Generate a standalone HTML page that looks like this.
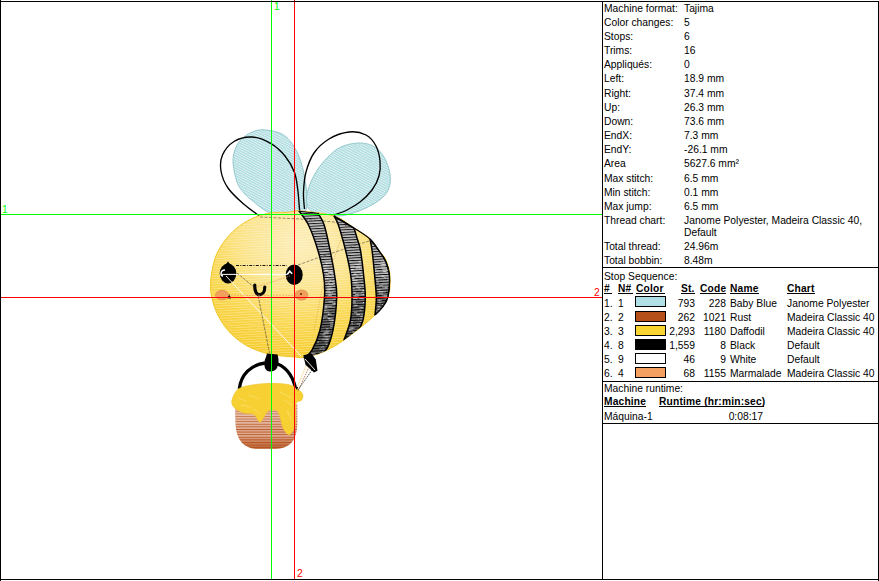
<!DOCTYPE html>
<html><head><meta charset="utf-8">
<style>
html,body{margin:0;padding:0;background:#fff;}
body{width:879px;height:581px;position:relative;overflow:hidden;font-family:"Liberation Sans",sans-serif;}
.ln{position:absolute;background:#000;}
.t{position:absolute;font-size:10.3px;line-height:12px;white-space:nowrap;color:#000;margin-top:-1px;}
.b{position:absolute;font-size:10.2px;letter-spacing:0.2px;line-height:12px;white-space:nowrap;color:#000;font-weight:bold;margin-top:-1px;}
.u{position:absolute;height:1px;background:#000;}
.sw{position:absolute;width:29px;height:9px;border:1px solid #000;left:635px;}
#bee{position:absolute;left:0;top:0;}
</style></head><body>
<svg id="bee" width="602" height="581" viewBox="0 0 602 581">
<defs>
<pattern id="pBlue" width="3" height="2.2" patternUnits="userSpaceOnUse" patternTransform="rotate(28)">
<rect width="3" height="2.2" fill="#a9dade"/><rect y="1.2" width="3" height="0.9" fill="#eaf7f8"/></pattern>
<pattern id="pYel" width="4" height="2.5" patternUnits="userSpaceOnUse" patternTransform="rotate(-3)">
<rect y="1.5" width="4" height="0.9" fill="#fffbe8" fill-opacity="0.42"/></pattern>
<radialGradient id="gYel" gradientUnits="userSpaceOnUse" cx="0" cy="0" r="1" gradientTransform="translate(300,242) scale(130,112)">
<stop offset="0" stop-color="#fcedb8"/><stop offset="0.4" stop-color="#fbe48c"/><stop offset="0.72" stop-color="#f9d64a"/><stop offset="1" stop-color="#f6cc2a"/></radialGradient>
<pattern id="pStripe" width="4" height="2.6" patternUnits="userSpaceOnUse" patternTransform="rotate(-3)">
<rect width="4" height="2.6" fill="#a4a4a4"/><rect y="0" width="4" height="1.0" fill="#0a0a0a"/><rect y="1.5" width="4" height="0.6" fill="#eeeeee"/></pattern>
<pattern id="pPot" width="5" height="2.6" patternUnits="userSpaceOnUse">
<rect width="5" height="2.6" fill="#b9541e"/><rect y="1.2" width="5" height="1.1" fill="#f2d6cc"/></pattern>
<linearGradient id="gPot" x1="0" y1="0" x2="0" y2="1">
<stop offset="0" stop-color="#fff" stop-opacity="0.3"/><stop offset="0.3" stop-color="#fff" stop-opacity="0.22"/><stop offset="0.62" stop-color="#fff" stop-opacity="0"/><stop offset="0.8" stop-color="#b3501c" stop-opacity="0.3"/><stop offset="1" stop-color="#b3501c" stop-opacity="0.8"/></linearGradient>
<linearGradient id="gStripeDark" x1="0" y1="0" x2="0" y2="1">
<stop offset="0" stop-color="#fff" stop-opacity="0.1"/><stop offset="0.45" stop-color="#000" stop-opacity="0"/><stop offset="0.7" stop-color="#000" stop-opacity="0.4"/><stop offset="1" stop-color="#000" stop-opacity="0.55"/></linearGradient>
<clipPath id="cBody"><path d="M210.5,283.5 C210.2,290.7 211.3,296.0 212.9,302.0 C214.5,308.0 217.0,313.9 220.1,319.2 C223.2,324.6 227.1,329.7 231.4,334.1 C235.8,338.4 240.9,342.3 246.2,345.4 C251.6,348.5 258.2,350.9 263.5,352.6 C268.8,354.2 272.7,354.8 278.0,355.5 C283.3,356.2 290.5,356.7 295.0,357.0 C299.5,357.3 300.3,358.3 305.0,357.5 C309.7,356.7 316.5,354.9 323.0,352.0 C329.5,349.1 335.3,346.2 344.0,340.0 C352.7,333.8 367.7,322.2 375.0,315.0 C382.3,307.8 385.5,303.5 388.0,297.0 C390.5,290.5 390.3,282.2 390.0,276.0 C389.7,269.8 387.7,264.0 386.0,260.0 C384.3,256.0 382.7,255.5 380.0,252.0 C377.3,248.5 374.3,243.0 370.0,239.0 C365.7,235.0 360.0,231.8 354.0,228.0 C348.0,224.2 343.0,218.8 334.0,216.0 C325.0,213.2 307.6,211.6 300.0,211.0 C292.4,210.4 293.3,211.9 288.2,212.3 C283.2,212.6 275.7,212.0 269.6,213.1 C263.5,214.2 257.4,216.1 251.8,218.7 C246.2,221.3 240.8,224.8 236.0,228.7 C231.3,232.7 227.0,237.4 223.4,242.5 C219.9,247.5 217.0,252.2 214.8,259.0 C212.7,265.9 210.8,276.3 210.5,283.5Z"/></clipPath>
<clipPath id="cS0"><path d="M299.0,211.0 C300.6,213.3 305.4,218.5 308.5,225.0 C311.6,231.5 315.3,241.7 317.8,250.0 C320.3,258.3 322.5,267.2 323.6,275.0 C324.7,282.8 325.1,287.8 324.5,297.0 C323.9,306.2 322.1,321.2 320.0,330.0 C317.9,338.8 314.7,345.3 312.0,350.0 C309.3,354.7 305.3,356.7 304.0,358.0 L316.0,357.0 C317.7,355.8 323.2,354.5 326.0,350.0 C328.8,345.5 331.2,338.8 333.0,330.0 C334.8,321.2 336.4,306.2 336.7,297.0 C337.0,287.8 335.7,282.8 334.6,275.0 C333.5,267.2 331.7,258.3 330.0,250.0 C328.3,241.7 326.2,231.2 324.2,225.0 C322.2,218.8 319.0,215.0 318.0,213.0Z"/></clipPath>
<clipPath id="cS1"><path d="M334.0,216.0 C334.7,217.5 336.5,219.3 338.4,225.0 C340.3,230.7 343.4,241.7 345.5,250.0 C347.6,258.3 349.6,267.2 350.7,275.0 C351.8,282.8 352.0,289.5 352.0,297.0 C352.0,304.5 351.8,312.8 350.5,320.0 C349.2,327.2 345.1,336.7 344.0,340.0 L357.0,333.0 C358.0,330.8 361.6,326.0 363.0,320.0 C364.4,314.0 365.2,304.5 365.3,297.0 C365.4,289.5 364.4,282.8 363.6,275.0 C362.8,267.2 361.5,256.2 360.4,250.0 C359.3,243.8 358.1,241.7 357.0,238.0 C355.9,234.3 354.5,229.7 354.0,228.0Z"/></clipPath>
<clipPath id="cS2"><path d="M370.0,239.0 C370.3,240.8 371.2,244.0 372.0,250.0 C372.8,256.0 373.9,267.2 374.6,275.0 C375.3,282.8 376.2,290.3 376.3,297.0 C376.4,303.7 375.2,312.0 375.0,315.0 L375.0,315.0 C376.2,313.8 379.8,311.0 382.0,308.0 C384.2,305.0 386.8,302.3 388.0,297.0 C389.2,291.7 389.8,281.8 389.5,276.0 C389.2,270.2 387.6,266.0 386.0,262.0 C384.4,258.0 382.7,255.8 380.0,252.0 C377.3,248.2 371.7,241.2 370.0,239.0Z"/></clipPath>
</defs>
<path d="M266.0,130.0 C270.5,130.5 277.5,131.5 282.0,134.0 C286.5,136.5 289.8,140.3 293.0,145.0 C296.2,149.7 298.8,155.2 301.0,162.0 C303.2,168.8 305.0,178.8 306.0,186.0 C307.0,193.2 307.7,200.3 307.0,205.0 C306.3,209.7 306.2,212.5 302.0,214.0 C297.8,215.5 287.7,214.3 282.0,214.0 C276.3,213.7 272.7,214.0 268.0,212.0 C263.3,210.0 258.0,205.2 254.0,202.0 C250.0,198.8 246.8,196.3 244.0,193.0 C241.2,189.7 238.8,187.2 237.0,182.0 C235.2,176.8 233.2,167.8 233.0,162.0 C232.8,156.2 234.2,151.2 236.0,147.0 C237.8,142.8 240.8,139.7 244.0,137.0 C247.2,134.3 251.3,132.2 255.0,131.0 C258.7,129.8 261.5,129.5 266.0,130.0Z" fill="url(#pBlue)" stroke="#8cc4c9" stroke-width="0.9"/>
<path d="M358.0,143.0 C363.3,142.8 368.7,143.7 373.0,146.0 C377.3,148.3 381.2,152.3 384.0,157.0 C386.8,161.7 389.2,168.8 390.0,174.0 C390.8,179.2 390.3,184.0 389.0,188.0 C387.7,192.0 385.5,194.8 382.0,198.0 C378.5,201.2 373.3,204.3 368.0,207.0 C362.7,209.7 355.5,212.5 350.0,214.0 C344.5,215.5 340.8,216.2 335.0,216.0 C329.2,215.8 319.7,214.8 315.0,213.0 C310.3,211.2 308.2,208.8 307.0,205.0 C305.8,201.2 306.5,195.5 308.0,190.0 C309.5,184.5 312.7,177.5 316.0,172.0 C319.3,166.5 323.8,161.2 328.0,157.0 C332.2,152.8 336.0,149.3 341.0,147.0 C346.0,144.7 352.7,143.2 358.0,143.0Z" fill="url(#pBlue)" stroke="#8cc4c9" stroke-width="0.9"/>
<path d="M260.0,216.5 C257.2,214.3 248.3,208.2 243.0,203.5 C237.7,198.8 231.7,193.4 228.0,188.0 C224.3,182.6 221.9,176.5 221.0,171.0 C220.1,165.5 220.3,159.9 222.5,155.0 C224.7,150.1 229.1,144.5 234.0,141.5 C238.9,138.5 245.8,136.7 252.0,137.0 C258.2,137.3 265.5,140.4 271.0,143.6 C276.5,146.8 281.1,151.2 285.0,156.0 C288.9,160.8 292.4,166.7 294.5,172.4 C296.6,178.1 297.0,184.1 297.8,190.0 C298.6,195.9 299.0,204.3 299.4,208.0 C299.8,211.7 299.9,211.3 300.0,212.0" fill="none" stroke="#000" stroke-width="1.35"/>
<path d="M304.5,209.0 C304.3,206.2 303.2,198.2 303.5,192.0 C303.8,185.8 304.2,178.5 306.0,172.0 C307.8,165.5 310.2,158.5 314.0,153.0 C317.8,147.5 323.2,142.5 329.0,139.0 C334.8,135.5 342.8,132.7 349.0,132.0 C355.2,131.3 361.5,132.7 366.0,135.0 C370.5,137.3 373.7,141.7 376.0,146.0 C378.3,150.3 379.5,156.0 380.0,161.0 C380.5,166.0 380.3,171.2 379.0,176.0 C377.7,180.8 375.2,185.7 372.0,190.0 C368.8,194.3 364.2,198.7 360.0,202.0 C355.8,205.3 351.3,207.8 347.0,210.0 C342.7,212.2 336.2,214.2 334.0,215.0" fill="none" stroke="#000" stroke-width="1.35"/>
<path d="M210.5,283.5 C210.2,290.7 211.3,296.0 212.9,302.0 C214.5,308.0 217.0,313.9 220.1,319.2 C223.2,324.6 227.1,329.7 231.4,334.1 C235.8,338.4 240.9,342.3 246.2,345.4 C251.6,348.5 258.2,350.9 263.5,352.6 C268.8,354.2 272.7,354.8 278.0,355.5 C283.3,356.2 290.5,356.7 295.0,357.0 C299.5,357.3 300.3,358.3 305.0,357.5 C309.7,356.7 316.5,354.9 323.0,352.0 C329.5,349.1 335.3,346.2 344.0,340.0 C352.7,333.8 367.7,322.2 375.0,315.0 C382.3,307.8 385.5,303.5 388.0,297.0 C390.5,290.5 390.3,282.2 390.0,276.0 C389.7,269.8 387.7,264.0 386.0,260.0 C384.3,256.0 382.7,255.5 380.0,252.0 C377.3,248.5 374.3,243.0 370.0,239.0 C365.7,235.0 360.0,231.8 354.0,228.0 C348.0,224.2 343.0,218.8 334.0,216.0 C325.0,213.2 307.6,211.6 300.0,211.0 C292.4,210.4 293.3,211.9 288.2,212.3 C283.2,212.6 275.7,212.0 269.6,213.1 C263.5,214.2 257.4,216.1 251.8,218.7 C246.2,221.3 240.8,224.8 236.0,228.7 C231.3,232.7 227.0,237.4 223.4,242.5 C219.9,247.5 217.0,252.2 214.8,259.0 C212.7,265.9 210.8,276.3 210.5,283.5Z" fill="url(#gYel)"/>
<path d="M210.5,283.5 C210.2,290.7 211.3,296.0 212.9,302.0 C214.5,308.0 217.0,313.9 220.1,319.2 C223.2,324.6 227.1,329.7 231.4,334.1 C235.8,338.4 240.9,342.3 246.2,345.4 C251.6,348.5 258.2,350.9 263.5,352.6 C268.8,354.2 272.7,354.8 278.0,355.5 C283.3,356.2 290.5,356.7 295.0,357.0 C299.5,357.3 300.3,358.3 305.0,357.5 C309.7,356.7 316.5,354.9 323.0,352.0 C329.5,349.1 335.3,346.2 344.0,340.0 C352.7,333.8 367.7,322.2 375.0,315.0 C382.3,307.8 385.5,303.5 388.0,297.0 C390.5,290.5 390.3,282.2 390.0,276.0 C389.7,269.8 387.7,264.0 386.0,260.0 C384.3,256.0 382.7,255.5 380.0,252.0 C377.3,248.5 374.3,243.0 370.0,239.0 C365.7,235.0 360.0,231.8 354.0,228.0 C348.0,224.2 343.0,218.8 334.0,216.0 C325.0,213.2 307.6,211.6 300.0,211.0 C292.4,210.4 293.3,211.9 288.2,212.3 C283.2,212.6 275.7,212.0 269.6,213.1 C263.5,214.2 257.4,216.1 251.8,218.7 C246.2,221.3 240.8,224.8 236.0,228.7 C231.3,232.7 227.0,237.4 223.4,242.5 C219.9,247.5 217.0,252.2 214.8,259.0 C212.7,265.9 210.8,276.3 210.5,283.5Z" fill="url(#pYel)"/>
<path d="M210.5,283.5 C210.2,290.7 211.3,296.0 212.9,302.0 C214.5,308.0 217.0,313.9 220.1,319.2 C223.2,324.6 227.1,329.7 231.4,334.1 C235.8,338.4 240.9,342.3 246.2,345.4 C251.6,348.5 258.2,350.9 263.5,352.6 C268.8,354.2 272.7,354.8 278.0,355.5 C283.3,356.2 290.5,356.7 295.0,357.0 C299.5,357.3 300.3,358.3 305.0,357.5 C309.7,356.7 316.5,354.9 323.0,352.0 C329.5,349.1 335.3,346.2 344.0,340.0 C352.7,333.8 367.7,322.2 375.0,315.0 C382.3,307.8 385.5,303.5 388.0,297.0 C390.5,290.5 390.3,282.2 390.0,276.0 C389.7,269.8 387.7,264.0 386.0,260.0 C384.3,256.0 382.7,255.5 380.0,252.0 C377.3,248.5 374.3,243.0 370.0,239.0 C365.7,235.0 360.0,231.8 354.0,228.0 C348.0,224.2 343.0,218.8 334.0,216.0 C325.0,213.2 307.6,211.6 300.0,211.0 C292.4,210.4 293.3,211.9 288.2,212.3 C283.2,212.6 275.7,212.0 269.6,213.1 C263.5,214.2 257.4,216.1 251.8,218.7 C246.2,221.3 240.8,224.8 236.0,228.7 C231.3,232.7 227.0,237.4 223.4,242.5 C219.9,247.5 217.0,252.2 214.8,259.0 C212.7,265.9 210.8,276.3 210.5,283.5Z" fill="none" stroke="#f2c628" stroke-width="1"/>
<g clip-path="url(#cBody)"><path d="M299.0,211.0 C300.6,213.3 305.4,218.5 308.5,225.0 C311.6,231.5 315.3,241.7 317.8,250.0 C320.3,258.3 322.5,267.2 323.6,275.0 C324.7,282.8 325.1,287.8 324.5,297.0 C323.9,306.2 322.1,321.2 320.0,330.0 C317.9,338.8 314.7,345.3 312.0,350.0 C309.3,354.7 305.3,356.7 304.0,358.0 L316.0,357.0 C317.7,355.8 323.2,354.5 326.0,350.0 C328.8,345.5 331.2,338.8 333.0,330.0 C334.8,321.2 336.4,306.2 336.7,297.0 C337.0,287.8 335.7,282.8 334.6,275.0 C333.5,267.2 331.7,258.3 330.0,250.0 C328.3,241.7 326.2,231.2 324.2,225.0 C322.2,218.8 319.0,215.0 318.0,213.0Z" fill="url(#pStripe)"/><path d="M299.0,211.0 C300.6,213.3 305.4,218.5 308.5,225.0 C311.6,231.5 315.3,241.7 317.8,250.0 C320.3,258.3 322.5,267.2 323.6,275.0 C324.7,282.8 325.1,287.8 324.5,297.0 C323.9,306.2 322.1,321.2 320.0,330.0 C317.9,338.8 314.7,345.3 312.0,350.0 C309.3,354.7 305.3,356.7 304.0,358.0 L316.0,357.0 C317.7,355.8 323.2,354.5 326.0,350.0 C328.8,345.5 331.2,338.8 333.0,330.0 C334.8,321.2 336.4,306.2 336.7,297.0 C337.0,287.8 335.7,282.8 334.6,275.0 C333.5,267.2 331.7,258.3 330.0,250.0 C328.3,241.7 326.2,231.2 324.2,225.0 C322.2,218.8 319.0,215.0 318.0,213.0Z" fill="url(#gStripeDark)"/><g clip-path="url(#cS0)"><path d="M324.8,262.0h4.8M329.3,262.0h1.7M326.3,263.7h1.7M325.5,263.7h1.6M321.9,263.7h1.7M323.8,265.7h1.9M331.3,265.7h3.7M325.6,265.7h3.5M323.4,268.3h3.4M325.7,270.3h1.9M324.4,270.3h4.4M329.0,270.3h3.5M328.7,272.3h4.0M328.0,272.3h3.7M330.8,272.3h3.4M325.9,274.4h2.8M331.3,274.4h2.1M332.4,276.0h3.3M326.5,276.0h4.1M325.4,278.6h3.3M333.7,280.6h3.0M329.6,280.6h1.8M327.6,282.9h2.7M332.2,282.9h3.2M329.0,284.6h4.8M327.4,286.9h4.1M327.2,289.1h4.4M331.4,289.1h2.9M329.1,289.1h1.6M326.6,290.8h3.2M328.6,292.7h2.4M325.2,292.7h4.5M330.3,292.7h3.1M327.5,295.2h4.5M328.4,295.2h3.0M326.4,297.7h2.0M333.5,299.5h1.5M328.7,301.3h1.5M330.3,301.3h2.8M334.4,303.8h4.5M332.0,303.8h3.8M333.5,303.8h3.1M327.7,306.4h4.3M324.4,306.4h2.9M323.9,306.4h3.7M324.3,308.1h3.0M324.4,310.3h1.5M323.3,312.0h3.6M326.8,312.0h2.2M327.7,314.2h3.6M327.8,314.2h1.9M322.8,316.8h3.2M325.8,316.8h1.9M321.8,318.6h2.1M327.7,318.6h4.8M327.9,318.6h2.0M328.9,320.3h2.5M331.3,320.3h1.8M332.0,320.3h3.3M330.3,322.2h3.4M330.1,324.2h3.6M330.2,326.5h4.3M326.1,328.9h2.2M325.2,331.2h4.3M324.2,333.0h4.8M330.8,333.0h4.8M323.2,333.0h4.8M322.2,334.8h3.1M323.2,336.9h4.4M327.1,336.9h3.8M325.4,336.9h1.8M322.2,339.4h4.1M326.1,339.4h2.1M326.2,339.4h2.7M324.6,342.0h3.1M317.2,342.0h1.8M325.7,344.6h2.0M320.9,347.0h3.6M319.5,349.0h2.0M322.7,349.0h1.6M322.2,351.4h3.3M311.0,353.4h4.4M315.0,355.3h3.3M312.6,355.3h2.6" stroke="#ffffff" stroke-width="0.7" stroke-opacity="0.7"/></g><path d="M299.0,211.0 C300.6,213.3 305.4,218.5 308.5,225.0 C311.6,231.5 315.3,241.7 317.8,250.0 C320.3,258.3 322.5,267.2 323.6,275.0 C324.7,282.8 325.1,287.8 324.5,297.0 C323.9,306.2 322.1,321.2 320.0,330.0 C317.9,338.8 314.7,345.3 312.0,350.0 C309.3,354.7 305.3,356.7 304.0,358.0 L316.0,357.0 C317.7,355.8 323.2,354.5 326.0,350.0 C328.8,345.5 331.2,338.8 333.0,330.0 C334.8,321.2 336.4,306.2 336.7,297.0 C337.0,287.8 335.7,282.8 334.6,275.0 C333.5,267.2 331.7,258.3 330.0,250.0 C328.3,241.7 326.2,231.2 324.2,225.0 C322.2,218.8 319.0,215.0 318.0,213.0Z" fill="none" stroke="#000" stroke-width="1.5"/></g>
<g clip-path="url(#cBody)"><path d="M334.0,216.0 C334.7,217.5 336.5,219.3 338.4,225.0 C340.3,230.7 343.4,241.7 345.5,250.0 C347.6,258.3 349.6,267.2 350.7,275.0 C351.8,282.8 352.0,289.5 352.0,297.0 C352.0,304.5 351.8,312.8 350.5,320.0 C349.2,327.2 345.1,336.7 344.0,340.0 L357.0,333.0 C358.0,330.8 361.6,326.0 363.0,320.0 C364.4,314.0 365.2,304.5 365.3,297.0 C365.4,289.5 364.4,282.8 363.6,275.0 C362.8,267.2 361.5,256.2 360.4,250.0 C359.3,243.8 358.1,241.7 357.0,238.0 C355.9,234.3 354.5,229.7 354.0,228.0Z" fill="url(#pStripe)"/><path d="M334.0,216.0 C334.7,217.5 336.5,219.3 338.4,225.0 C340.3,230.7 343.4,241.7 345.5,250.0 C347.6,258.3 349.6,267.2 350.7,275.0 C351.8,282.8 352.0,289.5 352.0,297.0 C352.0,304.5 351.8,312.8 350.5,320.0 C349.2,327.2 345.1,336.7 344.0,340.0 L357.0,333.0 C358.0,330.8 361.6,326.0 363.0,320.0 C364.4,314.0 365.2,304.5 365.3,297.0 C365.4,289.5 364.4,282.8 363.6,275.0 C362.8,267.2 361.5,256.2 360.4,250.0 C359.3,243.8 358.1,241.7 357.0,238.0 C355.9,234.3 354.5,229.7 354.0,228.0Z" fill="url(#gStripeDark)"/><g clip-path="url(#cS1)"><path d="M358.5,262.0h3.8M358.7,262.0h3.3M355.2,264.5h3.4M356.5,266.1h4.2M350.7,266.1h4.2M356.2,267.8h4.0M355.7,267.8h2.6M359.0,267.8h3.4M351.9,269.5h1.7M350.8,269.5h1.6M349.9,269.5h3.1M357.5,272.0h3.1M353.8,274.1h2.2M360.2,274.1h3.3M353.5,274.1h3.3M361.4,276.3h4.7M356.1,276.3h2.2M351.8,278.3h3.0M351.8,278.3h2.3M352.9,280.6h4.6M354.2,282.9h2.8M356.8,282.9h2.0M352.3,282.9h4.1M361.4,285.4h5.0M356.3,287.1h5.0M355.7,287.1h3.0M358.2,288.8h1.6M351.7,288.8h3.0M363.3,290.7h2.5M362.8,290.7h1.9M362.3,290.7h2.3M361.2,292.4h1.6M353.3,292.4h2.4M355.0,294.4h4.4M363.1,294.4h2.0M360.4,294.4h3.5M354.2,296.1h4.3M359.7,298.6h4.8M352.9,298.6h4.3M353.2,301.1h2.4M362.7,302.7h3.0M352.2,302.7h3.7M363.0,302.7h4.0M353.9,305.3h1.7M355.1,305.3h2.6M359.3,307.6h3.1M360.9,307.6h2.4M359.8,310.2h1.6M353.9,312.4h3.3M355.9,314.4h4.4M360.6,314.4h3.2M356.8,314.4h2.9M360.4,316.7h2.7M362.0,319.0h2.0M360.2,319.0h4.9M357.8,319.0h1.5M351.0,321.5h2.1M359.8,321.5h4.4M356.9,323.8h3.6M351.3,323.8h1.7M359.0,325.6h2.4M348.2,328.2h2.6M350.1,328.2h4.6M351.3,328.2h2.1M349.3,329.9h3.3M347.3,329.9h3.3M352.5,331.8h2.0" stroke="#ffffff" stroke-width="0.7" stroke-opacity="0.7"/></g><path d="M334.0,216.0 C334.7,217.5 336.5,219.3 338.4,225.0 C340.3,230.7 343.4,241.7 345.5,250.0 C347.6,258.3 349.6,267.2 350.7,275.0 C351.8,282.8 352.0,289.5 352.0,297.0 C352.0,304.5 351.8,312.8 350.5,320.0 C349.2,327.2 345.1,336.7 344.0,340.0 L357.0,333.0 C358.0,330.8 361.6,326.0 363.0,320.0 C364.4,314.0 365.2,304.5 365.3,297.0 C365.4,289.5 364.4,282.8 363.6,275.0 C362.8,267.2 361.5,256.2 360.4,250.0 C359.3,243.8 358.1,241.7 357.0,238.0 C355.9,234.3 354.5,229.7 354.0,228.0Z" fill="none" stroke="#000" stroke-width="1.5"/></g>
<g clip-path="url(#cBody)"><path d="M370.0,239.0 C370.3,240.8 371.2,244.0 372.0,250.0 C372.8,256.0 373.9,267.2 374.6,275.0 C375.3,282.8 376.2,290.3 376.3,297.0 C376.4,303.7 375.2,312.0 375.0,315.0 L375.0,315.0 C376.2,313.8 379.8,311.0 382.0,308.0 C384.2,305.0 386.8,302.3 388.0,297.0 C389.2,291.7 389.8,281.8 389.5,276.0 C389.2,270.2 387.6,266.0 386.0,262.0 C384.4,258.0 382.7,255.8 380.0,252.0 C377.3,248.2 371.7,241.2 370.0,239.0Z" fill="url(#pStripe)"/><path d="M370.0,239.0 C370.3,240.8 371.2,244.0 372.0,250.0 C372.8,256.0 373.9,267.2 374.6,275.0 C375.3,282.8 376.2,290.3 376.3,297.0 C376.4,303.7 375.2,312.0 375.0,315.0 L375.0,315.0 C376.2,313.8 379.8,311.0 382.0,308.0 C384.2,305.0 386.8,302.3 388.0,297.0 C389.2,291.7 389.8,281.8 389.5,276.0 C389.2,270.2 387.6,266.0 386.0,262.0 C384.4,258.0 382.7,255.8 380.0,252.0 C377.3,248.2 371.7,241.2 370.0,239.0Z" fill="url(#gStripeDark)"/><g clip-path="url(#cS2)"><path d="M380.8,262.0h4.0M383.1,262.0h1.7M382.0,264.5h3.0M384.5,264.5h3.3M380.4,264.5h4.1M381.0,266.9h4.4M382.3,269.4h4.8M374.6,269.4h1.8M386.3,269.4h3.7M382.5,271.4h3.5M383.2,271.4h3.7M375.4,273.5h3.1M381.9,276.0h1.8M381.2,276.0h4.1M386.4,276.0h4.3M383.6,277.8h2.3M387.0,279.9h1.8M375.6,279.9h2.5M377.1,282.1h1.8M383.1,284.0h3.9M381.4,284.0h2.0M387.6,284.0h3.2M379.0,285.7h3.9M384.8,287.8h3.1M382.2,287.8h5.0M375.9,289.7h4.8M381.1,291.8h4.9M378.3,291.8h2.4M378.3,291.8h4.8M379.0,293.9h4.1M381.7,295.9h4.4M383.9,295.9h4.6M386.0,295.9h2.3M385.9,298.0h2.1M377.4,300.3h2.6M379.0,300.3h2.7M378.6,302.7h2.6M382.1,304.7h4.0M378.0,306.6h1.7M376.1,306.6h4.5M376.7,309.1h4.5M378.4,309.1h1.7M375.9,311.4h2.4M375.4,313.5h4.2" stroke="#ffffff" stroke-width="0.7" stroke-opacity="0.7"/></g><path d="M370.0,239.0 C370.3,240.8 371.2,244.0 372.0,250.0 C372.8,256.0 373.9,267.2 374.6,275.0 C375.3,282.8 376.2,290.3 376.3,297.0 C376.4,303.7 375.2,312.0 375.0,315.0 L375.0,315.0 C376.2,313.8 379.8,311.0 382.0,308.0 C384.2,305.0 386.8,302.3 388.0,297.0 C389.2,291.7 389.8,281.8 389.5,276.0 C389.2,270.2 387.6,266.0 386.0,262.0 C384.4,258.0 382.7,255.8 380.0,252.0 C377.3,248.2 371.7,241.2 370.0,239.0Z" fill="none" stroke="#000" stroke-width="1.5"/></g>
<path d="M334.0,216.0 C337.3,218.0 348.0,224.2 354.0,228.0 C360.0,231.8 365.7,235.0 370.0,239.0 C374.3,243.0 377.3,248.2 380.0,252.0 C382.7,255.8 384.4,258.0 386.0,262.0 C387.6,266.0 389.2,270.2 389.5,276.0 C389.8,281.8 389.2,291.7 388.0,297.0 C386.8,302.3 384.2,305.0 382.0,308.0 C379.8,311.0 376.2,313.8 375.0,315.0" fill="none" stroke="#000" stroke-width="1.2"/>
<ellipse cx="228" cy="273.5" rx="8.3" ry="9.9" fill="#000"/><path d="M226,264 l2,-2.5 l2,2.5z" fill="#000"/>
<ellipse cx="294.2" cy="274.7" rx="8.5" ry="10.2" fill="#000"/>
<path d="M225,270 q-4,0 -4,4 q0,2 2,2" stroke="#fff" stroke-width="1.5" fill="none"/>
<path d="M287.2,274.5 l2.5,-3.3 l2.5,2.5" stroke="#fff" stroke-width="1.6" fill="none"/>
<ellipse cx="222" cy="295" rx="6.6" ry="4.9" fill="#f0a05c" stroke="#d88a48" stroke-width="0.5"/>
<ellipse cx="301.4" cy="295" rx="6.6" ry="5.2" fill="#f0a05c" stroke="#d88a48" stroke-width="0.5"/>
<circle cx="301" cy="294" r="1.1" fill="#6a3010"/>
<path d="M227,298.3 l2.5,-4.3 l1.6,4.5z" fill="#111"/>
<path d="M254.8,285 C254.5,291.5 256.5,294.6 259.5,294.6 C262.5,294.6 264.8,291.5 264.8,287" stroke="#000" stroke-width="3.2" fill="none" stroke-linecap="round"/>
<path d="M236,265.5 L287,265.5" stroke="#000" stroke-width="0.9" stroke-dasharray="3,1.3,1,1.3" fill="none"/>
<path d="M298,265 L320,257 L372,240" stroke="#222" stroke-width="0.6" stroke-opacity="0.8" stroke-dasharray="3,1.5" fill="none"/>
<path d="M260,217 L300,219 L334,222 L354,228" stroke="#222" stroke-width="0.6" stroke-opacity="0.8" stroke-dasharray="3,1.5" fill="none"/>
<path d="M222,274.4 L287,274.4" stroke="#fff" stroke-width="1" fill="none"/>
<path d="M226,276 L301,356" stroke="#fff" stroke-width="0.9" fill="none"/>
<path d="M237,273 L255,288 L258,295 L269.5,353" stroke="#222" stroke-width="0.6" stroke-opacity="0.85" stroke-dasharray="3,1" fill="none"/>
<path d="M228,295.3 L296,295.3" stroke="#e89060" stroke-width="0.6" stroke-dasharray="2,1" fill="none"/>
<path d="M257.5,286.7 L290,276" stroke="#e89060" stroke-width="0.6" stroke-dasharray="2,1" fill="none"/>
<path d="M346,226 L322,290 L314,330" stroke="#b5501a" stroke-width="0.6" stroke-opacity="0.6" stroke-dasharray="1,1.5" fill="none"/>
<path d="M235,404 L235.5,424 C236,440 244,448.5 257,448.8 L276,448.8 C290,448.5 297,440 297.3,424 L297.3,404 Z" fill="url(#pPot)"/>
<path d="M235,404 L235.5,424 C236,440 244,448.5 257,448.8 L276,448.8 C290,448.5 297,440 297.3,424 L297.3,404 Z" fill="url(#gPot)"/>
<path d="M239.3,389 C241,374 251,365 265,363 M277.5,364 C288,368 294,379 295.8,390" stroke="#000" stroke-width="3.3" fill="none"/>
<path d="M267,353.5 L277.5,354.5 C279,359 279,364 277,368 C275,372 268,373 265.5,369 C263.5,365 264.5,360 266,357 Z" fill="#000"/>
<path d="M232.0,400.0 C232.9,397.1 234.9,390.5 240.0,388.0 C245.1,385.5 258.5,383.9 266.0,383.5 C273.5,383.1 284.6,383.6 290.0,385.0 C295.4,386.4 300.2,390.8 302.0,393.0 C303.8,395.2 302.7,398.4 301.8,400.0 C300.9,401.6 297.0,400.1 296.0,404.0 C295.0,407.9 296.1,421.4 295.0,426.0 C293.9,430.6 290.8,434.4 289.0,434.7 C287.2,435.0 284.4,430.9 283.0,428.0 C281.6,425.1 280.6,418.2 279.6,415.6 C278.6,413.0 278.0,411.3 276.5,410.5 C275.0,409.7 270.9,410.0 269.3,410.5 C267.7,411.0 267.4,411.8 266.0,413.6 C264.6,415.4 261.8,422.2 260.0,422.3 C258.2,422.4 256.5,416.0 254.0,414.6 C251.5,413.2 246.5,414.1 243.5,413.0 C240.5,411.9 235.7,409.3 234.0,407.4 C232.3,405.4 231.1,402.9 232.0,400.0Z" fill="#f7d133" stroke="#eec22a" stroke-width="0.6"/>
<path d="M238,398 l8,3 M241,405 l10,2 M280,392 l12,6 M284,400 l8,5 M287,410 l4,9 M254,409 l6,5 M249,395 l10,4" stroke="#fff6c8" stroke-width="0.6" stroke-opacity="0.55" fill="none"/>
<path d="M303.3,355.3 L311.5,353.6 L315.8,359.6 L317.5,370.8 L314,372.5 L305.5,364.8 Z" fill="#000"/>
<path d="M305,359 L315,370" stroke="#fff" stroke-width="0.9"/>
<path d="M306,366 L296,390" stroke="#f0c030" stroke-width="0.7" stroke-dasharray="1.5,1" fill="none"/>
<path d="M309,367 L298,391" stroke="#b5501a" stroke-width="0.7" stroke-dasharray="1.5,1" fill="none"/>
<path d="M312,370 L298,390" stroke="#000" stroke-width="0.7" stroke-dasharray="1.5,1" fill="none"/>
<path d="M297,390 l-2,-3 l3,0z" fill="#000"/>
</svg>
<!-- guide lines -->
<div class="ln" style="left:271px;top:0;width:1px;height:579px;background:#00ff00"></div>
<div class="ln" style="left:294px;top:0;width:1px;height:579px;background:#ff0000"></div>
<div class="ln" style="left:1px;top:214px;width:601px;height:1px;background:#00ff00"></div>
<div class="ln" style="left:1px;top:297px;width:601px;height:1px;background:#ff0000"></div>
<div class="t" style="left:274px;top:2px;color:#00ff00">1</div>
<div class="t" style="left:2px;top:205px;color:#00ff00">1</div>
<div class="t" style="left:594px;top:288px;color:#ff0000">2</div>
<div class="t" style="left:297px;top:569px;color:#ff0000">2</div>
<!-- frame -->
<div class="ln" style="left:0;top:0;width:1px;height:581px"></div>
<div class="ln" style="left:0;top:1px;width:879px;height:1px"></div>
<div class="ln" style="left:878px;top:1px;width:1px;height:580px"></div>
<div class="ln" style="left:0;top:579px;width:879px;height:1px"></div>
<div class="ln" style="left:602px;top:1px;width:1px;height:579px"></div>
<div class="ln" style="left:602px;top:267px;width:277px;height:1px"></div>
<div class="ln" style="left:602px;top:381px;width:277px;height:1px"></div>
<div class="ln" style="left:602px;top:423px;width:277px;height:1px"></div>
<!-- info -->
<div class="t" style="left:604px;top:4px">Machine format:</div><div class="t" style="left:684px;top:4px">Tajima</div>
<div class="t" style="left:604px;top:18px">Color changes:</div><div class="t" style="left:684px;top:18px">5</div>
<div class="t" style="left:604px;top:32px">Stops:</div><div class="t" style="left:684px;top:32px">6</div>
<div class="t" style="left:604px;top:46px">Trims:</div><div class="t" style="left:684px;top:46px">16</div>
<div class="t" style="left:604px;top:60px">Appliqués:</div><div class="t" style="left:684px;top:60px">0</div>
<div class="t" style="left:604px;top:74px">Left:</div><div class="t" style="left:684px;top:74px">18.9 mm</div>
<div class="t" style="left:604px;top:89px">Right:</div><div class="t" style="left:684px;top:89px">37.4 mm</div>
<div class="t" style="left:604px;top:103px">Up:</div><div class="t" style="left:684px;top:103px">26.3 mm</div>
<div class="t" style="left:604px;top:117px">Down:</div><div class="t" style="left:684px;top:117px">73.6 mm</div>
<div class="t" style="left:604px;top:131px">EndX:</div><div class="t" style="left:684px;top:131px">7.3 mm</div>
<div class="t" style="left:604px;top:145px">EndY:</div><div class="t" style="left:684px;top:145px">-26.1 mm</div>
<div class="t" style="left:604px;top:159px">Area</div><div class="t" style="left:684px;top:159px">5627.6 mm²</div>
<div class="t" style="left:604px;top:174px">Max stitch:</div><div class="t" style="left:684px;top:174px">6.5 mm</div>
<div class="t" style="left:604px;top:188px">Min stitch:</div><div class="t" style="left:684px;top:188px">0.1 mm</div>
<div class="t" style="left:604px;top:202px">Max jump:</div><div class="t" style="left:684px;top:202px">6.5 mm</div>
<div class="t" style="left:604px;top:216px">Thread chart:</div><div class="t" style="left:684px;top:216px">Janome Polyester, Madeira Classic 40,</div>
<div class="t" style="left:684px;top:228px">Default</div>
<div class="t" style="left:604px;top:242px">Total thread:</div><div class="t" style="left:684px;top:242px">24.96m</div>
<div class="t" style="left:604px;top:256px">Total bobbin:</div><div class="t" style="left:684px;top:256px">8.48m</div>

<div class="t" style="left:604px;top:272px">Stop Sequence:</div>
<div class="b" style="left:604px;top:284px">#</div><div class="u" style="left:604px;top:293px;width:8px"></div>
<div class="b" style="left:618px;top:284px">N#</div><div class="u" style="left:618px;top:293px;width:15px"></div>
<div class="b" style="left:636px;top:284px">Color</div><div class="u" style="left:636px;top:293px;width:29px"></div>
<div class="b" style="left:681px;top:284px">St.</div><div class="u" style="left:681px;top:293px;width:14px"></div>
<div class="b" style="left:700px;top:284px">Code</div><div class="u" style="left:700px;top:293px;width:26px"></div>
<div class="b" style="left:730px;top:284px">Name</div><div class="u" style="left:730px;top:293px;width:29px"></div>
<div class="b" style="left:787px;top:284px">Chart</div><div class="u" style="left:787px;top:293px;width:28px"></div>

<div class="t" style="left:604px;top:299px">1.</div><div class="t" style="left:618px;top:299px">1</div>
<div class="sw" style="top:296px;background:#b0e0e6"></div>
<div class="t" style="right:184px;top:299px">793</div><div class="t" style="right:153px;top:299px">228</div>
<div class="t" style="left:730px;top:299px">Baby Blue</div><div class="t" style="left:787px;top:299px">Janome Polyester</div>

<div class="t" style="left:604px;top:313px">2.</div><div class="t" style="left:618px;top:313px">2</div>
<div class="sw" style="top:311px;background:#b5501a"></div>
<div class="t" style="right:184px;top:313px">262</div><div class="t" style="right:153px;top:313px">1021</div>
<div class="t" style="left:730px;top:313px">Rust</div><div class="t" style="left:787px;top:313px">Madeira Classic 40</div>

<div class="t" style="left:604px;top:327px">3.</div><div class="t" style="left:618px;top:327px">3</div>
<div class="sw" style="top:325px;background:#f8d531"></div>
<div class="t" style="right:184px;top:327px">2,293</div><div class="t" style="right:153px;top:327px">1180</div>
<div class="t" style="left:730px;top:327px">Daffodil</div><div class="t" style="left:787px;top:327px">Madeira Classic 40</div>

<div class="t" style="left:604px;top:341px">4.</div><div class="t" style="left:618px;top:341px">8</div>
<div class="sw" style="top:339px;background:#000"></div>
<div class="t" style="right:184px;top:341px">1,559</div><div class="t" style="right:153px;top:341px">8</div>
<div class="t" style="left:730px;top:341px">Black</div><div class="t" style="left:787px;top:341px">Default</div>

<div class="t" style="left:604px;top:355px">5.</div><div class="t" style="left:618px;top:355px">9</div>
<div class="sw" style="top:353px;background:#fff"></div>
<div class="t" style="right:184px;top:355px">46</div><div class="t" style="right:153px;top:355px">9</div>
<div class="t" style="left:730px;top:355px">White</div><div class="t" style="left:787px;top:355px">Default</div>

<div class="t" style="left:604px;top:369px">6.</div><div class="t" style="left:618px;top:369px">4</div>
<div class="sw" style="top:367px;background:#f4a060"></div>
<div class="t" style="right:184px;top:369px">68</div><div class="t" style="right:153px;top:369px">1155</div>
<div class="t" style="left:730px;top:369px">Marmalade</div><div class="t" style="left:787px;top:369px">Madeira Classic 40</div>

<div class="t" style="left:604px;top:384px">Machine runtime:</div>
<div class="b" style="left:604px;top:397px">Machine</div><div class="u" style="left:604px;top:406px;width:42px"></div>
<div class="b" style="left:659px;top:397px">Runtime (hr:min:sec)</div><div class="u" style="left:659px;top:406px;width:105px"></div>
<div class="t" style="left:604px;top:412px">Máquina-1</div>
<div class="t" style="right:116px;top:412px">0:08:17</div>
</body></html>
